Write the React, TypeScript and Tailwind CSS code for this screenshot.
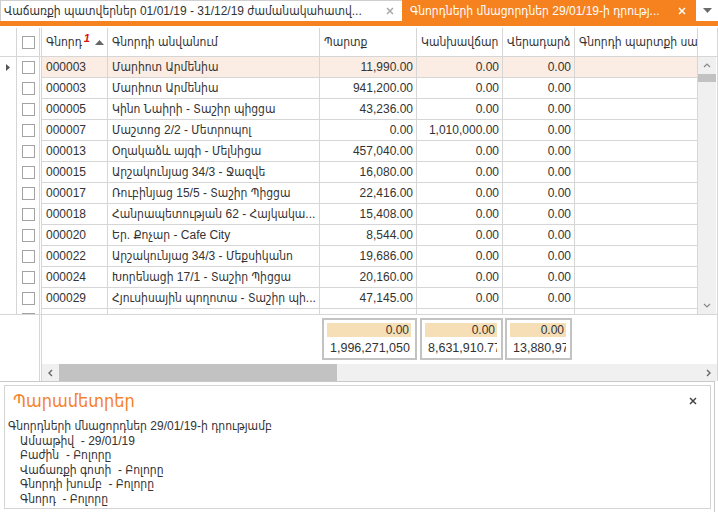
import React from 'react';

const rows: string[][] = [
  ['000003', 'Մարիոտ Արմենիա', '11,990.00', '0.00', '0.00'],
  ['000003', 'Մարիոտ Արմենիա', '941,200.00', '0.00', '0.00'],
  ['000005', 'Կինո Նաիրի - Տաշիր պիցցա', '43,236.00', '0.00', '0.00'],
  ['000007', 'Մաշտոց 2/2 - Մետրոպոլ', '0.00', '1,010,000.00', '0.00'],
  ['000013', 'Օղակաձև  այգի - Մելնիցա', '457,040.00', '0.00', '0.00'],
  ['000015', 'Արշակունյաց 34/3 - Ջազվե', '16,080.00', '0.00', '0.00'],
  ['000017', 'Ռուբինյաց 15/5 - Տաշիր Պիցցա', '22,416.00', '0.00', '0.00'],
  ['000018', 'Հանրապետության 62 - Հայկակա...', '15,408.00', '0.00', '0.00'],
  ['000020', 'Եր. Քոչար - Cafe City', '8,544.00', '0.00', '0.00'],
  ['000022', 'Արշակունյաց 34/3 - Մեքսիկանո', '19,686.00', '0.00', '0.00'],
  ['000024', 'Խորենացի 17/1 - Տաշիր  Պիցցա', '20,160.00', '0.00', '0.00'],
  ['000029', 'Հյուսիսային պողոտա - Տաշիր պի...', '47,145.00', '0.00', '0.00'],
  ['', '', '', '', ''],
];

const colCls = [
  'w-[67px] border-l border-r border-[#d6d6d6] pl-[4px]',
  'w-[212px] border-r border-[#d6d6d6] pl-[4px]',
  'w-[97px] border-r border-[#d6d6d6] pr-[3px] text-right',
  'w-[86px] border-r border-[#d6d6d6] pr-[3px] text-right',
  'w-[72px] border-r border-[#d6d6d6] pr-[3px] text-right',
  'w-[123px] border-r border-[#d6d6d6] pl-[4px]',
];

function Check() {
  return <div className="w-[13px] h-[13px] border border-[#a3a3a3] bg-white" />;
}

function Cross({ color }: { color: string }) {
  return (
    <svg width="8" height="8" viewBox="0 0 8 8">
      <path d="M1 1L7 7M7 1L1 7" stroke={color} strokeWidth="1.5" />
    </svg>
  );
}

export default function App() {
  return (
    <div className="w-[718px] h-[512px] overflow-hidden bg-white text-[12px] text-[#333] font-['Liberation_Sans','DejaVu_Sans_Condensed','DejaVu_Sans',sans-serif]">
      {/* tabs */}
      <div className="flex h-[21px]">
        <div className="w-[402px] flex items-center justify-between border-l border-t border-[#cfcfcf] pl-[3px] pr-[8px] whitespace-nowrap">
          <span>Վաճառքի պատվերներ 01/01/19 - 31/12/19 ժամանակահատվ...</span>
          <Cross color="#a8a8a8" />
        </div>
        <div className="w-[294px] flex items-center justify-between bg-[#f5821f] text-white pl-[8px] pr-[10px] whitespace-nowrap">
          <span>Գնորդների մնացորդներ 29/01/19-ի դրությ...</span>
          <Cross color="#ffffff" />
        </div>
        <div className="flex-1 flex items-center justify-center">
          <svg width="9" height="5" viewBox="0 0 9 5">
            <path d="M0 0H9L4.5 5Z" fill="#6b6b6b" />
          </svg>
        </div>
      </div>
      <div className="h-[5px] bg-[#f5821f]" />

      {/* grid */}
      <div className="mt-[2px] w-[718px] border-r border-[#d6d6d6]">
        {/* header */}
        <div className="flex h-[29px] border-b border-[#d6d6d6]">
          <div className="w-[17px] border-r border-[#d6d6d6]" />
          <div className="w-[23px] border-r border-[#d6d6d6] flex items-center justify-center">
            <Check />
          </div>
          <div className="w-[1px]" />
          <div className={colCls[0] + ' flex items-center'}>
            <span>Գնորդ</span>
            <span className="text-[#e01010] font-bold italic text-[11px] leading-none mb-[7px] ml-[2px]">1</span>
            <svg className="ml-[5px]" width="9" height="5" viewBox="0 0 9 5">
              <path d="M0 5H9L4.5 0Z" fill="#666" />
            </svg>
          </div>
          <div className={colCls[1] + ' flex items-center'}>Գնորդի անվանում</div>
          <div className="w-[97px] border-r border-[#d6d6d6] pl-[4px] flex items-center">Պարտք</div>
          <div className="w-[86px] border-r border-[#d6d6d6] pl-[4px] flex items-center">Կանխավճար</div>
          <div className="w-[72px] border-r border-[#d6d6d6] pl-[4px] flex items-center">Վերադարձ</div>
          <div className={colCls[5] + ' flex items-center overflow-hidden whitespace-nowrap'}>Գնորդի պարտքի սալդո</div>
          <div className="w-[18px]" />
        </div>

        {/* body */}
        <div className="flex h-[257px]">
          <div className="w-[698px] h-[257px] overflow-hidden">
            {rows.map((r, i) => (
              <div key={i} className="flex h-[21px]">
                <div className="w-[17px] border-r border-[#d6d6d6] flex items-center justify-center">
                  {i === 0 && (
                    <svg width="4" height="7" viewBox="0 0 4 7">
                      <path d="M0 0L4 3.5L0 7Z" fill="#555" />
                    </svg>
                  )}
                </div>
                <div className="w-[23px] border-r border-[#d6d6d6] flex items-center justify-center">
                  <Check />
                </div>
                <div className="w-[1px]" />
                <div className={'flex border-b border-[#d6d6d6] ' + (i === 0 ? 'bg-[#fbede4]' : '')}>
                  {colCls.map((c, j) => (
                    <div key={j} className={c + ' leading-[20px] whitespace-nowrap overflow-hidden'}>
                      {r[j] ?? ''}
                    </div>
                  ))}
                </div>
              </div>
            ))}
          </div>
          <div className="w-[18px] bg-[#f0f0f0] flex flex-col">
            <div className="h-[17px] flex items-center justify-center">
              <svg width="8" height="5" viewBox="0 0 8 5">
                <path d="M1 4L4 1L7 4" stroke="#888" strokeWidth="1.2" fill="none" />
              </svg>
            </div>
            <div className="h-[8px] bg-[#c2c2c2]" />
            <div className="flex-1" />
            <div className="h-[17px] flex items-center justify-center">
              <svg width="8" height="5" viewBox="0 0 8 5">
                <path d="M1 1L4 4L7 1" stroke="#888" strokeWidth="1.2" fill="none" />
              </svg>
            </div>
          </div>
        </div>

        {/* footer */}
        <div className="flex h-[50px] border-t border-[#d6d6d6]">
          <div className="w-[40px] border-r border-[#d6d6d6]" />
          <div className="w-[1px]" />
          <div className="flex-1 border-l border-[#d6d6d6] flex items-start">
            <div className="w-[280px]" />
            {[
              ['w-[95px] ml-0', '1,996,271,050.00'],
              ['w-[83px] ml-[3px]', '8,631,910.77'],
              ['w-[67px] ml-[2px]', '13,880,970.00'],
            ].map(([w, v], k) => (
              <div key={k} className={w + ' mt-[3px] h-[42px] border-2 border-[#c3c3c3] flex flex-col overflow-hidden'}>
                <div className="mt-[3px] ml-[3px] mr-[4px] h-[14px] bg-[#f6deb6] text-right leading-[14px] pr-[2px]">0.00</div>
                <div className="mt-[4px] ml-[6px] mr-[4px] leading-[14px] text-[12.5px] whitespace-nowrap overflow-hidden">{v}</div>
              </div>
            ))}
          </div>
        </div>

        {/* h scrollbar */}
        <div className="flex h-[17px]">
          <div className="w-[40px] border-r border-[#d6d6d6]" />
          <div className="w-[1px]" />
          <div className="flex-1 border-l border-[#d6d6d6] bg-[#f0f0f0] flex">
            <div className="w-[17px] flex items-center justify-center">
              <svg width="5" height="8" viewBox="0 0 5 8">
                <path d="M4 1L1 4L4 7" stroke="#666" strokeWidth="1.4" fill="none" />
              </svg>
            </div>
            <div className="w-[278px] bg-[#c2c2c2]" />
            <div className="flex-1" />
            <div className="w-[17px] flex items-center justify-center">
              <svg width="5" height="8" viewBox="0 0 5 8">
                <path d="M1 1L4 4L1 7" stroke="#666" strokeWidth="1.4" fill="none" />
              </svg>
            </div>
          </div>
        </div>
      </div>

      {/* parameters panel */}
      <div className="h-[131px] w-[715px] border-t border-r border-[#c9c9c9] pl-[4px] pt-[3px]">
        <div className="w-[707px] h-[124px] border border-[#d4d4d4] px-[3px]">
          <div className="flex items-center justify-between h-[24px] mt-[3px] pl-[5px] pr-[10px]">
            <span className="text-[18px] text-[#f5822a]">Պարամետրեր</span>
            <Cross color="#444" />
          </div>
          <div className="mt-[6px] leading-[14.5px] text-[12px] text-[#333]">
            <div>Գնորդների մնացորդներ 29/01/19-ի դրությամբ</div>
            <div className="pl-[12px] whitespace-pre">Ամսաթիվ  - 29/01/19</div>
            <div className="pl-[12px] whitespace-pre">Բաժին  - Բոլորը</div>
            <div className="pl-[12px] whitespace-pre">Վաճառքի գոտի  - Բոլորը</div>
            <div className="pl-[12px] whitespace-pre">Գնորդի խումբ  - Բոլորը</div>
            <div className="pl-[12px] whitespace-pre">Գնորդ  - Բոլորը</div>
          </div>
        </div>
      </div>
    </div>
  );
}
